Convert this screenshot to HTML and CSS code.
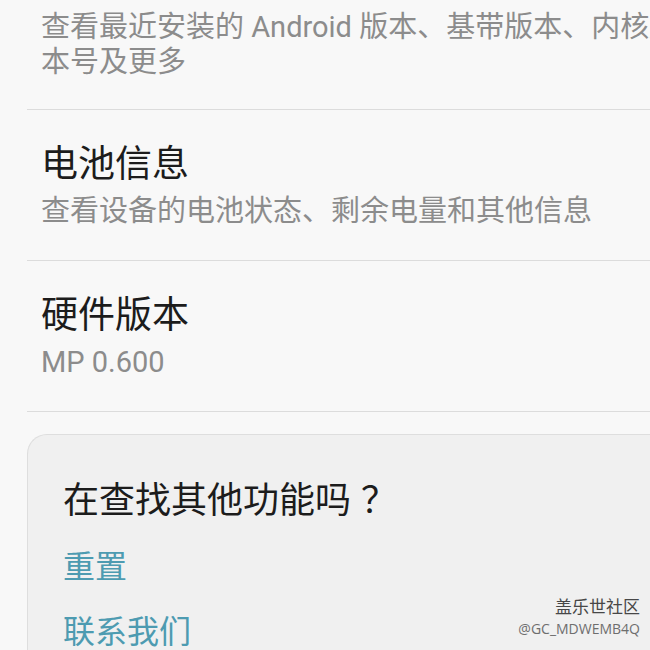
FILE: index.html
```html
<!DOCTYPE html>
<html lang="zh-CN">
<head>
    <meta charset="UTF-8">
    <meta name="viewport" content="width=device-width, initial-scale=1.0">
    <title>关于手机</title>
    <link rel="stylesheet" href="styles.css">
</head>
<body>
    <div class="list">
        <div class="item first">
            <div class="sub">查看最近安装的 Android 版本、基带版本、内核版<br>本号及更多</div>
        </div>
        <div class="item">
            <div class="title">电池信息</div>
            <div class="sub">查看设备的电池状态、剩余电量和其他信息</div>
        </div>
        <div class="item">
            <div class="title">硬件版本</div>
            <div class="sub">MP 0.600</div>
        </div>
    </div>

    <div class="card">
        <div class="card-title">在查找其他功能吗<span class="qmark">？</span></div>
        <a class="link" href="#">重置</a>
        <a class="link" href="#">联系我们</a>
    </div>

    <div class="watermark">
        <div class="wm-name">盖乐世社区</div>
        <div class="wm-user">@GC_MDWEMB4Q</div>
    </div>
</body>
</html>
```

FILE: styles.css
```css
html, body {
    margin: 0;
    height: 650px;
    overflow: hidden;
}
body {
    font-family: 'Roboto', 'Noto Sans CJK SC', sans-serif;
    background-color: #f8f8f8;
    color: #1a1a1a;
    position: relative;
}
.list {
    margin-left: 27px;
}
.item {
    padding: 32px 0 31px 14px;
    border-bottom: 1px solid #dcdcdc;
}
.item.first {
    padding-top: 10px;
    padding-bottom: 29px;
}
.title {
    font-size: 37px;
    line-height: 46px;
    color: #1c1c1c;
}
.sub {
    font-size: 29px;
    line-height: 36px;
    margin-top: 5px;
    color: #8c8c8c;
    white-space: nowrap;
}
.item.first .sub {
    margin-top: 0;
    line-height: 35px;
}
.card {
    margin: 22px 0 0 27px;
    padding: 39px 0 0 35px;
    background-color: #f0f0f0;
    border: 1px solid #dedede;
    border-right: none;
    border-radius: 20px 0 0 0;
    height: 300px;
}
.card-title {
    font-family: 'Noto Sans CJK SC', sans-serif;
    font-size: 36px;
    line-height: 46px;
    margin-bottom: 15px;
    color: #1c1c1c;
}
.qmark {
    margin-left: 10px;
}
.link {
    display: block;
    font-size: 32px;
    line-height: 65px;
    color: #4d9bb1;
    text-decoration: none;
}
.watermark {
    position: absolute;
    right: 10px;
    top: 594px;
    text-align: right;
    font-family: 'Noto Sans CJK SC', sans-serif;
    line-height: 23px;
}
.wm-name {
    color: #474747;
    font-size: 17px;
}
.wm-user {
    color: #6e6e6e;
    font-family: 'Open Sans', sans-serif;
    font-size: 14px;
}
```
